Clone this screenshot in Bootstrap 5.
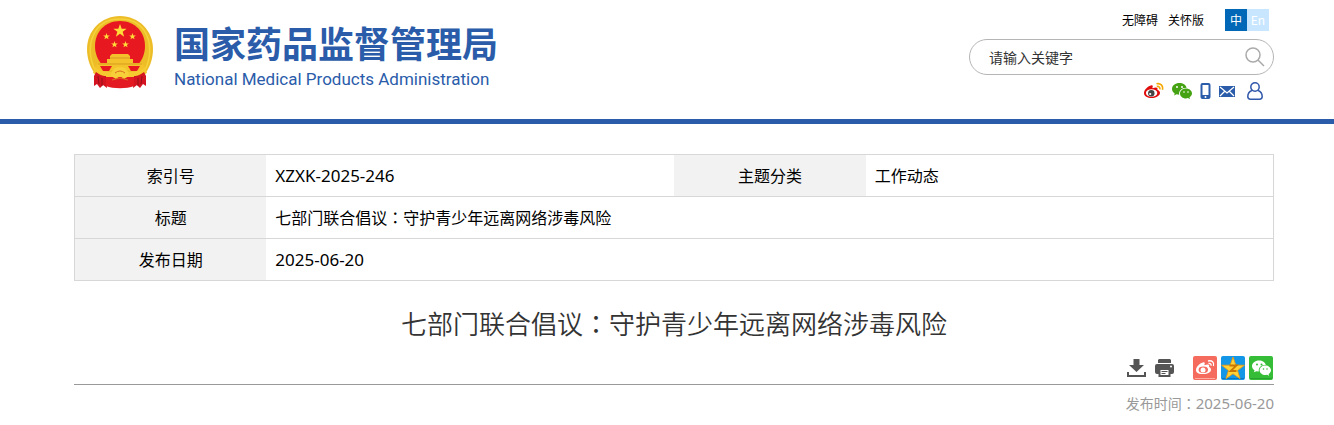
<!DOCTYPE html>
<html lang="zh-CN">
<head>
<meta charset="utf-8">
<meta name="viewport" content="width=device-width, initial-scale=1">
<title>七部门联合倡议：守护青少年远离网络涉毒风险</title>
<link rel="stylesheet" href="https://cdn.jsdelivr.net/npm/bootstrap@5.3.0/dist/css/bootstrap.min.css">
<style>
body{font-family:"Noto Sans","Noto Sans CJK SC",sans-serif;font-size:16px;color:#000;background:#fff;padding-left:14px}
.zh{font-family:"Noto Sans CJK SC",sans-serif}
.colon{font-family:"Noto Sans CJK TC",sans-serif}
.page-wrap{max-width:1200px}
.site-header{height:124px;border-bottom:5px solid #2a5caa;margin-left:-14px;padding-left:14px}
.brand{color:#2a5caa;padding:15px 0 0 12px}
.brand-zh{font:700 36px/54px "Noto Sans CJK SC",sans-serif}
.brand-en{font:400 17px/20px Roboto,sans-serif}
.brand-names{padding:0 0 0 20px}
.tools{width:305px}
.top-links{height:39px;padding:9px 5px 0 0;font-size:12px;line-height:22px}
.top-links a{color:#000;text-decoration:none;margin-right:10px}
.top-links .lang{width:22px;height:22px;margin:0;text-align:center;color:#fff;background:#c8e6ff}
.top-links .lang-on{background:#0068b7;margin-left:11px}
.search-box{height:36px;border:1px solid #b5b5b5;border-radius:18px;padding:0 8px 0 19px}
.search-box input{font-size:14px;background:none;outline:0;min-width:0}
.search-box input::placeholder{color:#333;opacity:1}
.icon-row{height:32px;padding-right:11px}
.icon-row a,.share a{display:block;line-height:0}
.info-table{table-layout:fixed;margin:30px 0 0;border:1px solid #d7d7d7;line-height:24px}
.info-table th,.info-table td{height:42px;padding:0 9px;border-bottom:1px solid #d7d7d7;vertical-align:middle;color:#000}
.info-table th{width:16%;font-weight:400;text-align:center;background:#f2f2f2}
.code-text{font-size:17px}
.article-title{font:350 26px/40px "Noto Sans CJK SC DemiLight","Noto Sans CJK SC",sans-serif;color:#333;margin:22px 0 13px}
.share{height:29px;border-bottom:1px solid #999;padding-right:1px}
.share button{line-height:0}
.published{font-size:14px;line-height:20px;color:#999;margin-top:8px}
.published time{font-size:15px}
</style>
</head>
<body>
<svg class="d-none" aria-hidden="true">
<symbol id="chat" viewBox="0 0 20 16"><path d="M7.4 0C3.3 0 0 2.6 0 5.9c0 1.9 1 3.4 2.7 4.5L2 12.6l2.600-1.300 2.600.5C6.500 8 9.300 4.700 14.600 4.700 14 2 11 0 7.400 0z"/><path d="M20 10.400c0-2.800-2.700-5-6-5s-6 2.200-6 5 2.700 5 6 5l1.900-.3 2.100 1-.5-1.900c1.500-.9 2.500-2.300 2.500-3.800z"/></symbol>
<symbol id="star" viewBox="-10 -10 20 20"><path d="M0-10 2.400-3.200 9.500-3.100 3.800 1.200 5.900 8.100 0 4-5.900 8.100-3.800 1.200-9.500-3.100-2.400-3.200z"/></symbol>
</svg>
<header class="site-header">
 <div class="page-wrap mx-auto d-flex justify-content-between">
  <div class="brand d-flex align-items-start">
   <svg width="68" height="75" viewBox="0 0 68 75" role="img" aria-label="国徽">
    <path d="M34 1C15 1 1 16 1 34c0 11 4 20 9 26h48c5-6 9-15 9-26C67 16 53 1 34 1z" fill="#edbd28"/>
    <path d="M9 55C-2 33 6 4 34 4s36 29 25 51" fill="none" stroke="#f6d23c" stroke-width="1.500"/>
    <path d="M34 6c15 0 25 11 25 25 0 8-3 14-7 19H16C12 45 9 39 9 31 9 17 19 6 34 6z" fill="#e81820"/>
    <g fill="#ffdc38"><use href="#star" x="27" y="9" width="14" height="14"/><use href="#star" x="17" y="18" width="7" height="7"/><use href="#star" x="43" y="18" width="7" height="7"/><use href="#star" x="25" y="26" width="7" height="7"/><use href="#star" x="36" y="26" width="7" height="7"/></g>
    <path d="M24 41l2-2h16l2 2v3h3v4h9l3 4-5 3H14l-5-3 3-4h9v-4h3z" fill="#f4c22b"/>
    <path d="M24 43h20M12 49h44" stroke="#d99b20" stroke-width="1"/>
    <path d="M14 51h12l-3 5h-6zM42 51h12l-3 5h-6z" fill="#e81820"/>
    <path d="M9 52c7 5 14 5 18 5h14c4 0 11 0 18-5l2 6c-5 3-10 5-15 5H22c-5 0-10-2-15-5z" fill="#f5c92f"/>
    <path d="M10 57c5 4 8 4 10 4l1 12-4-3-3 3-3-4-3 2V61zM58 57c-5 4-8 4-10 4l-1 12 4-3 3 3 3-4 3 2V61z" fill="#d41420"/>
    <path d="M12 61l1 8M16 63v8M52 63v8M56 61l-1 8" stroke="#96101c" stroke-width="1"/>
    <path d="M20 62h28v9c-7 3-21 3-28 0z" fill="#e41a22"/>
    <path d="M25 61c1-6 3-9 9-9s8 3 9 9l-5 3-4-3-4 3z" fill="#f7cf39"/><path d="M29 58q5-4 10 0M26 65l8-2 8 2" fill="none" stroke="#db6b22" stroke-width="1"/>
   </svg>
   <div class="brand-names"><div class="brand-zh">国家药品监督管理局</div><div class="brand-en">National Medical Products Administration</div></div>
  </div>
  <div class="tools">
   <nav class="top-links d-flex justify-content-end zh" aria-label="辅助"><a href="#">无障碍</a><a href="#">关怀版</a><a class="lang lang-on" href="#">中</a><a class="lang" href="#">En</a></nav>
   <form class="search-box d-flex align-items-center" role="search">
    <input class="border-0 p-0 flex-grow-1 zh" type="text" aria-label="请输入关键字" placeholder="请输入关键字">
    <button class="border-0 bg-transparent p-0 lh-1" type="button" aria-label="搜索"><svg width="20" height="20" fill="none" stroke="#aaa" stroke-width="1.500"><circle cx="8" cy="8" r="7"/><path d="M13 13l6 6"/></svg></button>
   </form>
   <div class="icon-row d-flex justify-content-end align-items-center">
    <a href="#" aria-label="微博"><svg width="20" height="18" viewBox="0 0 20 18"><path d="M8.500 5.200C9.500 3.300 8 2.700 5.500 4 2.600 5.500 0 8.300 0 11.200 0 14.200 3.500 16 7.700 16c5 0 8.300-2.700 8.300-5.300 0-1.600-1.300-2.500-2.600-2.800.9-2.800-1.600-3-4.900-1.700z" fill="#e00b0b"/><ellipse cx="7.600" cy="11" rx="5.700" ry="3.800" fill="#fff"/><circle cx="7.300" cy="11.300" r="3.200" fill="#444"/><circle cx="6.200" cy="12" r="1.100" fill="#fff"/><path d="M12.500 1.800c4-1 7 2 5.900 5.900M12.800 4.500c2-.5 3.500.8 3 2.900" fill="none" stroke="#f5a800" stroke-width="1.600"/></svg></a>
    <a class="ms-2" href="#" aria-label="微信"><svg width="20" height="18"><use href="#chat" x="0" y="1" width="20" height="16" fill="#45a313"/><g fill="#fff"><circle cx="5" cy="5" r="1"/><circle cx="10" cy="5" r="1"/><circle cx="12" cy="10" r=".8"/><circle cx="16" cy="10" r=".8"/></g></svg></a>
    <a class="ms-2" href="#" aria-label="移动端"><svg width="11" height="18"><rect x=".5" y="1" width="10" height="16" rx="2" fill="#2a5caa"/><path d="M2.500 3h6v10h-6z" fill="#fff"/><circle cx="5.500" cy="15" r="1" fill="#fff"/></svg></a>
    <a class="ms-2" href="#" aria-label="邮箱"><svg width="16" height="18"><path d="M0 4h16v11H0z" fill="#2a5caa"/><path d="M1 5l7 6 7-6M1 14l5-5M15 14l-5-5" fill="none" stroke="#fff" stroke-width="1.200"/></svg></a>
    <a class="ms-2 ps-1" href="#" aria-label="个人中心"><svg width="16" height="18" viewBox="0 0 16 18" fill="none" stroke="#3158aa" stroke-width="1.500"><circle cx="8" cy="5" r="4.200"/><path d="M5 8.500C2.200 9.500.8 12 .8 14.500c0 1.900.8 2.700 2.700 2.700h9c1.900 0 2.700-.8 2.700-2.700 0-2.500-1.400-5-4.200-6"/></svg></a>
   </div>
  </div>
 </div>
</header>
<main class="page-wrap mx-auto">
 <table class="table info-table">
  <tbody>
   <tr><th scope="row">索引号</th><td class="code-text">XZXK-2025-246</td><th scope="row">主题分类</th><td>工作动态</td></tr>
   <tr><th scope="row">标题</th><td colspan="3">七部门联合倡议<span class="colon" lang="zh-TW">：</span>守护青少年远离网络涉毒风险</td></tr>
   <tr><th scope="row">发布日期</th><td class="code-text" colspan="3">2025-06-20</td></tr>
  </tbody>
 </table>
 <h1 class="article-title text-center">七部门联合倡议<span class="colon" lang="zh-TW">：</span>守护青少年远离网络涉毒风险</h1>
 <div class="share d-flex justify-content-end align-items-start">
  <button class="border-0 bg-transparent p-0 me-2" type="button" aria-label="下载"><svg width="20" height="24" fill="#555"><path d="M6.500 3h6v6H17l-7.500 7L2 9h4.500z"/><path d="M1 16v4h17v-4" fill="none" stroke="#555" stroke-width="2"/></svg></button>
  <button class="border-0 bg-transparent p-0 me-3" type="button" aria-label="打印"><svg width="22" height="24" fill="#555"><path d="M4 3h11l1 1v3H3V4zM2 8h15q2 0 2 2v6q0 2-2 2H2q-2 0-2-2v-6q0-2 2-2z"/><path d="M4.500 13h10v7h-10z" fill="#fff" stroke="#555" stroke-width="2"/><path d="M6.500 15h6v1h-6zM6.500 17h4v1h-4z"/><circle cx="16" cy="10.500" r="1" fill="#fff"/></svg></button>
  <a href="#" aria-label="分享到微博"><svg width="24" height="24"><rect width="24" height="24" rx="2" fill="#f56b5d"/><path d="M2 22.500h20" stroke="#ffaaa0"/><g fill="#fff" transform="translate(3 3)"><path d="M8.500 5.200C9.500 3.300 8 2.700 5.500 4 2.600 5.500 0 8.300 0 11.200 0 14.200 3.500 15 7.200 15c5 0 7.800-2 7.800-4.300 0-1.600-1-2.500-2-2.800.9-2.800-1.200-3-4.500-1.700z"/></g><ellipse cx="10.300" cy="13.800" rx="4.700" ry="3.200" fill="#f56b5d"/><circle cx="10" cy="14" r="2.500" fill="#fff"/><path d="M15 5c4-1 6.500 1.500 5.500 5M15.500 7.500c2-.3 3 .7 2.500 2.300" fill="none" stroke="#fff" stroke-width="1.300"/></svg></a>
  <a class="ms-1" href="#" aria-label="分享到QQ空间"><svg width="24" height="24"><rect width="24" height="24" rx="2" fill="#1296e5"/><path d="M1 22.500h22" stroke="#0876c2"/><use href="#star" x="0" y="1" width="24" height="24" fill="#ffd338" stroke="#ed9b13" stroke-width=".7"/><path d="M8.500 9.500h7l-6 5.500h6" fill="none" stroke="#c97600" stroke-width="1.800"/></svg></a>
  <a class="ms-1" href="#" aria-label="分享到微信"><svg width="24" height="24"><rect width="24" height="24" rx="2" fill="#35bd38"/><path d="M1 22.500h22" stroke="#29a032"/><use href="#chat" x="3" y="4" width="19" height="16" fill="#fff"/><g fill="#35bd38"><circle cx="8" cy="8.500" r="1"/><circle cx="12.500" cy="8.500" r="1"/><circle cx="14.500" cy="13" r=".8"/><circle cx="18" cy="13" r=".8"/></g></svg></a>
 </div>
 <div class="published text-end">发布时间<span class="colon" lang="zh-TW">：</span><time datetime="2025-06-20">2025-06-20</time></div>
</main>
<script src="https://cdn.jsdelivr.net/npm/bootstrap@5.3.0/dist/js/bootstrap.bundle.min.js"></script>
</body>
</html>
